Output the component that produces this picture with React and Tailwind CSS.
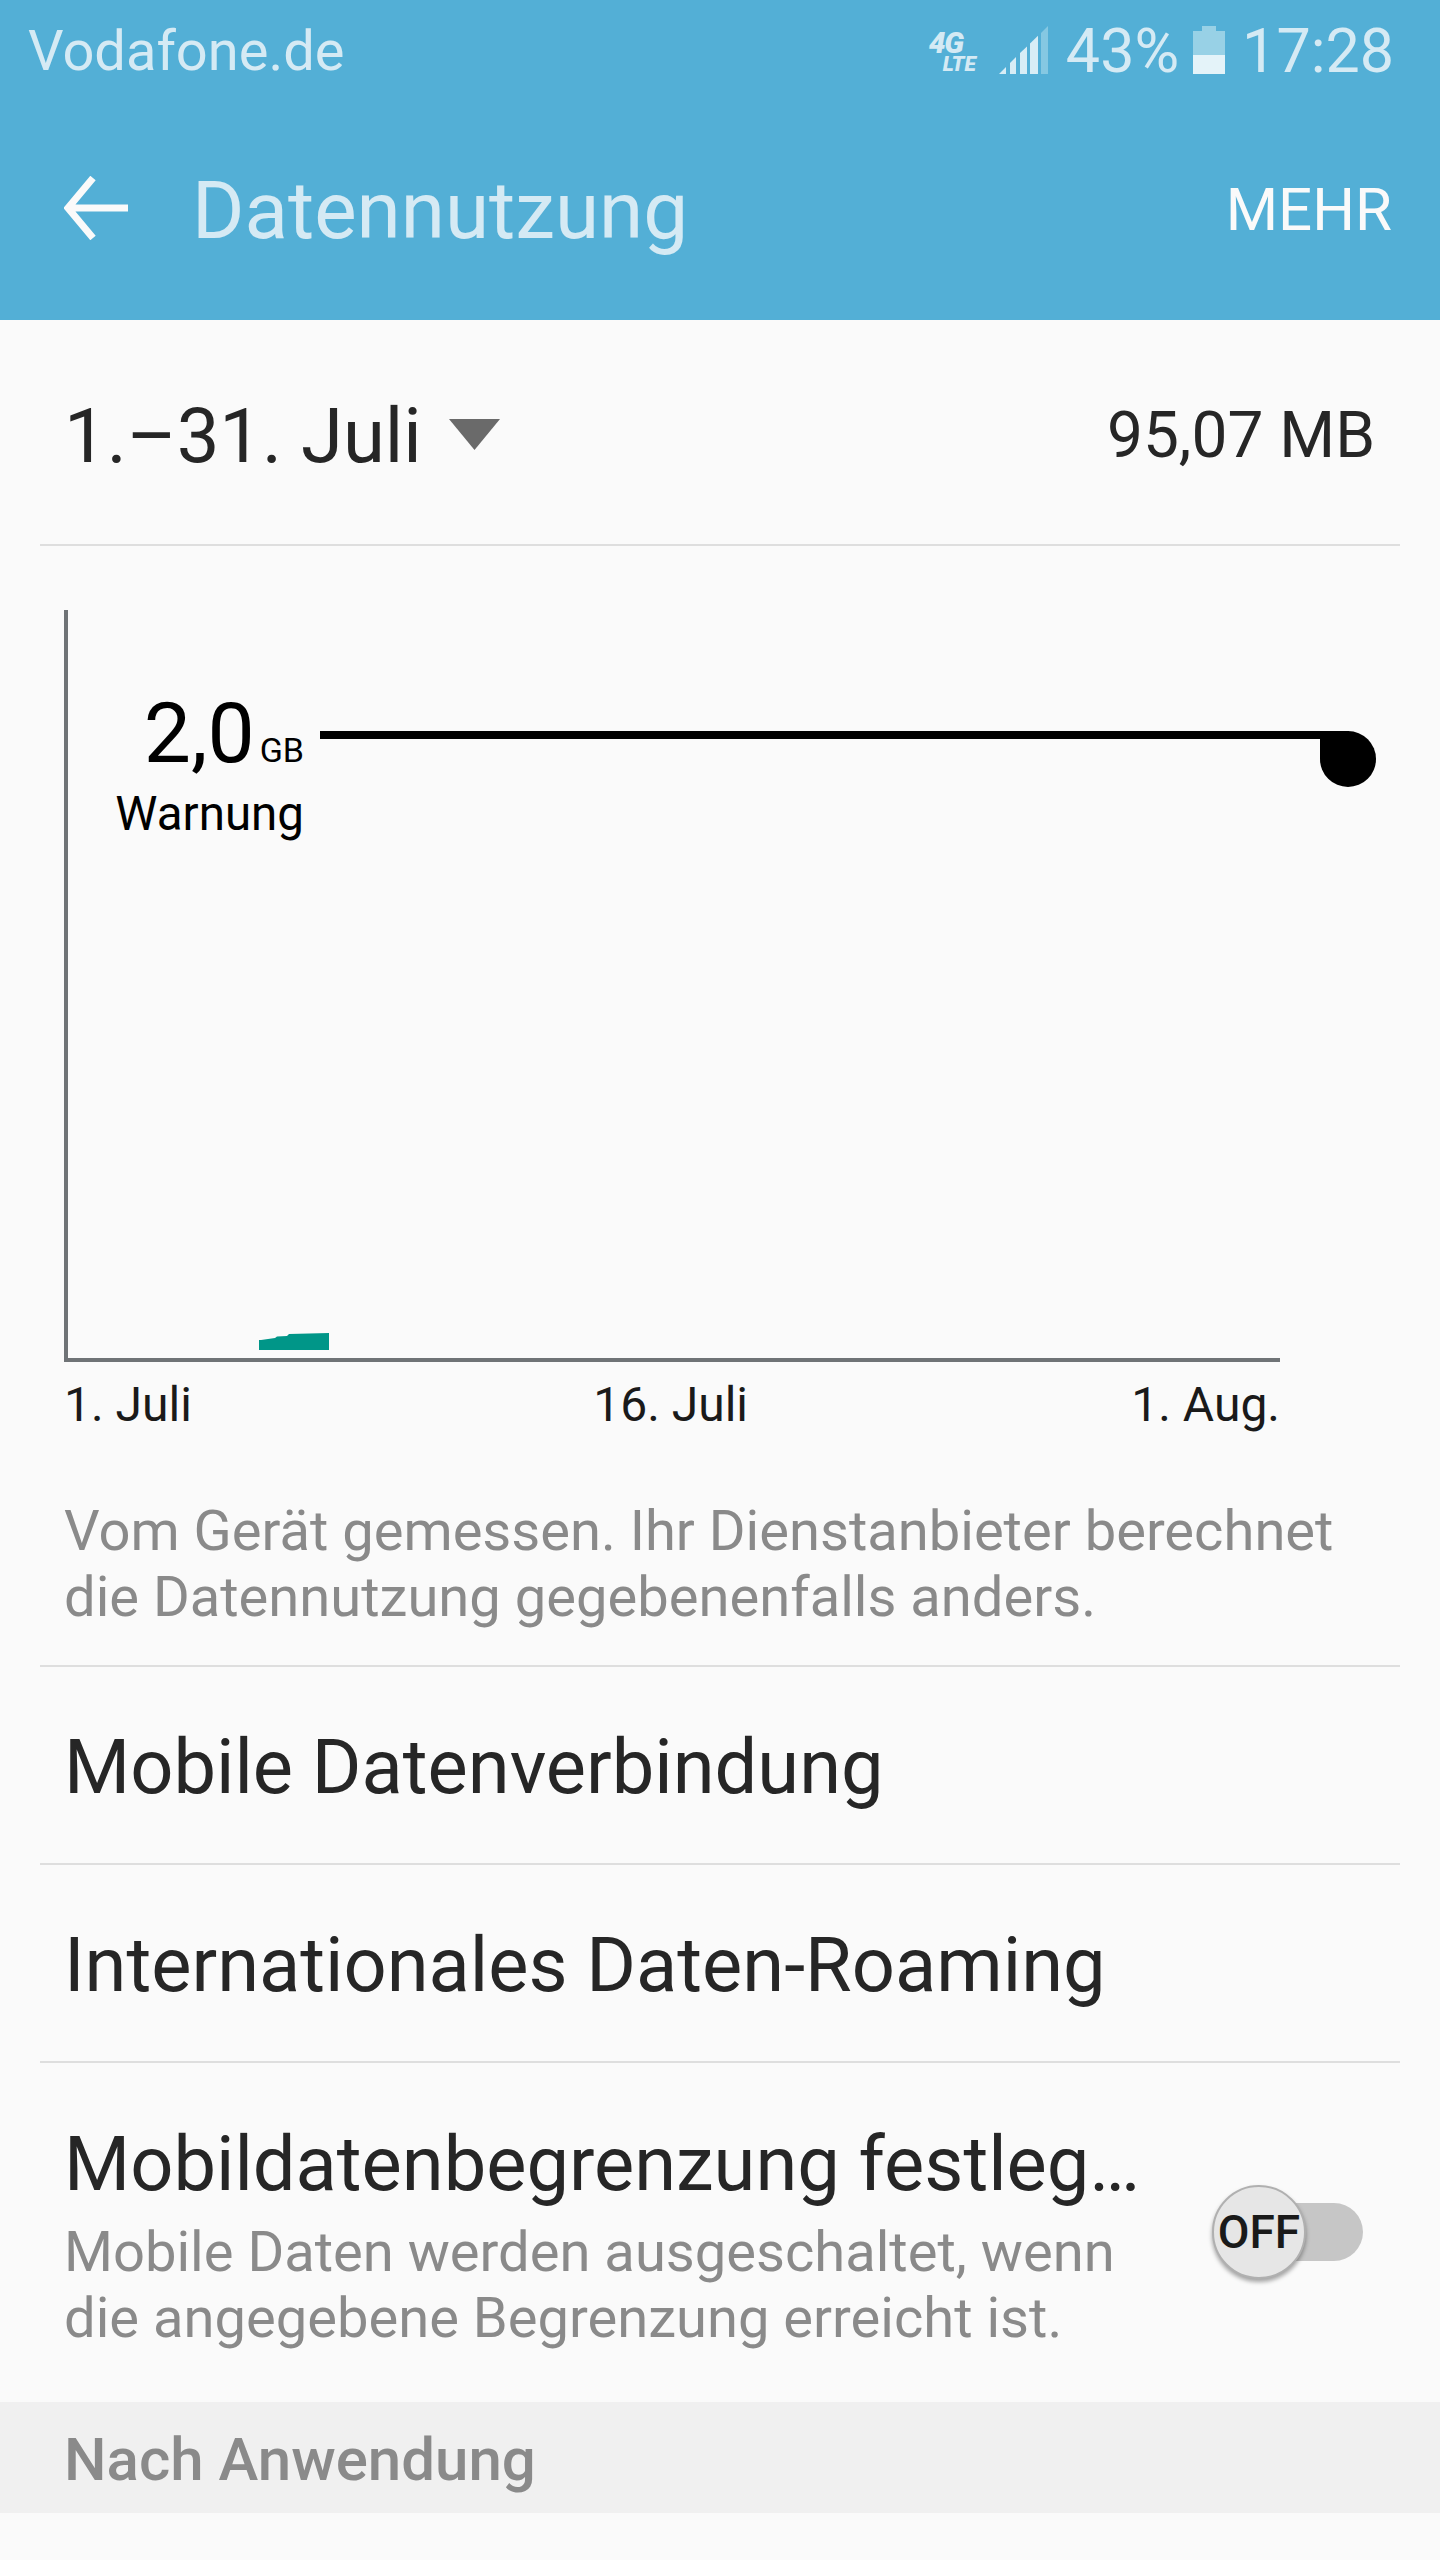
import React from "react";

const roboto = "font-['Roboto',sans-serif]";

function SignalIcon() {
  return (
    <svg width="49" height="48" viewBox="0 0 49 48" className="block">
      <polygon points="0,48 7,41 7,48" fill="#d8edf6" />
      <polygon points="11,37 17,31 17,48 11,48" fill="#d8edf6" />
      <polygon points="21,27 28,20.5 28,48 21,48" fill="#d8edf6" />
      <polygon points="31,17.6 39,9.8 39,48 31,48" fill="#d8edf6" />
      <polygon points="42,7 49,0 49,48 42,48" fill="#85c8e2" />
    </svg>
  );
}

function BatteryIcon() {
  return (
    <svg width="32" height="48" viewBox="0 0 32 48" className="block">
      <rect x="9" y="0" width="14" height="6" fill="#98d1e6" />
      <rect x="0" y="5" width="32" height="25" fill="#98d1e6" />
      <rect x="0" y="29" width="32" height="19" fill="#e4f3f9" />
    </svg>
  );
}

function Divider() {
  return <div className="mx-10 h-[2px] bg-[#dedede]" />;
}

export default function App() {
  return (
    <div className={`${roboto} w-[1440px] h-[2560px] bg-[#fafafa] overflow-hidden`}>
      <header className="h-[320px] bg-[#53afd6] flex flex-col">
        <div className="h-[104px] flex items-start pl-[28px] pr-[46px] pt-[21px] text-[56px] leading-[60px] text-[#d5eaf4]">
          <span>Vodafone.de</span>
          <div className="ml-auto flex items-center text-[61px]">
            <div className="w-[47px] h-[44px] flex flex-col italic font-black leading-none text-[#d5eaf4] mt-[4px]">
              <span className="text-[30px] leading-[24px] tracking-[-1.5px]">4G</span>
              <span className="text-[21px] leading-[18px] self-end tracking-[0px]">LTE</span>
            </div>
            <div className="ml-[23px] mb-[2px]"><SignalIcon /></div>
            <span className="ml-[18px]">43%</span>
            <div className="ml-[14px] mb-[2px]"><BatteryIcon /></div>
            <span className="ml-[17px]">17:28</span>
          </div>
        </div>
        <div className="flex-1 flex items-start relative">
          <svg width="64" height="64" viewBox="0 0 64 64" className="ml-[64px] mt-[72px] block" fill="none" stroke="#fafafa" strokeWidth="7">
            <path d="M29 2 L4 32 L29 62 M4 32 H64" />
          </svg>
          <span className="ml-[64px] mt-[62px] text-[80px] leading-[90px] text-[#d5eaf4]">Datennutzung</span>
          <span className="ml-auto mr-[48px] mt-[73px] text-[60px] leading-[66px] text-[#fafafa]">MEHR</span>
        </div>
      </header>

      <div className="h-[224px] pl-[64px] pr-[65px] flex items-center justify-between">
        <div className="flex items-center">
          <span className="text-[76px] leading-none text-[#262626] mt-[8px]">1.–31. Juli</span>
          <svg width="51" height="31" viewBox="0 0 51 31" className="ml-[27px] mt-[4px]"><polygon points="0,0 51,0 25.5,31" fill="#6a6a6a" /></svg>
        </div>
        <span className="text-[64px] leading-none text-[#262626] mt-[8px]">95,07 MB</span>
      </div>
      <Divider />

      <div className="relative h-[1119px]">
        <div className="absolute left-[64px] top-[64px] w-[1216px] h-[752px] border-l-4 border-b-4 border-[#6f7376]" />
        <div className="absolute left-[259px] top-[787px] w-[70px] h-[17px] bg-[#009688] [clip-path:polygon(0_7px,2px_7px,16px_5px,18px_3.5px,28px_3px,30px_1px,100%_0,100%_100%,0_100%)]" />
        <div className="absolute right-[1136px] top-[146px] flex items-baseline text-black">
          <span className="text-[84px] leading-[84px]">2,0</span>
          <span className="ml-[5px] text-[34px]">GB</span>
        </div>
        <div className="absolute right-[1136px] top-[240px] text-[47.5px] leading-[56px] text-black whitespace-nowrap">Warnung</div>
        <div className="absolute left-[320px] top-[185px] w-[1029px] h-[8px] bg-black" />
        <div className="absolute left-[1320px] top-[185px] w-[56px] h-[56px] rounded-[0_28px_28px_28px] bg-black" />
        <div className="absolute left-[64px] top-[831px] w-[1216px] flex justify-between text-[48px] leading-[56px] text-[#1a1a1a]">
          <span>1. Juli</span>
          <span className="relative left-[9px]">16. Juli</span>
          <span>1. Aug.</span>
        </div>
        <div className="absolute left-[64px] top-[952px] text-[56.1px] leading-[66px] text-[#8a8a8a] whitespace-nowrap">
          <div>Vom Gerät gemessen. Ihr Dienstanbieter berechnet</div>
          <div>die Datennutzung gegebenenfalls anders.</div>
        </div>
      </div>
      <Divider />

      <div className="h-[196px] pl-[64px] pt-[5px] flex items-center text-[75.8px] leading-none text-[#262626]">Mobile Datenverbindung</div>
      <Divider />
      <div className="h-[196px] pl-[64px] pt-[5px] flex items-center text-[75.8px] leading-none text-[#262626]">Internationales Daten-Roaming</div>
      <Divider />

      <div className="h-[339px] pl-[64px] pr-[77px] flex items-center">
        <div className="flex-1 min-w-0 mt-[8px]">
          <div className="text-[75.8px] leading-[84px] text-[#262626] whitespace-nowrap">Mobildatenbegrenzung festleg…</div>
          <div className="mt-[12px] text-[56.1px] leading-[66px] text-[#8a8a8a] whitespace-nowrap">
            <div>Mobile Daten werden ausgeschaltet, wenn</div>
            <div>die angegebene Begrenzung erreicht ist.</div>
          </div>
        </div>
        <div className="relative w-[151px] h-[96px] shrink-0">
          <div className="absolute left-[40px] top-[18px] right-0 h-[58px] rounded-full bg-[#c6c6c6]" />
          <div className="absolute left-0 top-0 w-[94px] h-[94px] rounded-full bg-[#e6e6e6] border-2 border-[#b0b0b0] shadow-[0_3px_4px_rgba(0,0,0,0.35)] flex items-center justify-center text-[46px] font-medium leading-none text-[#1a1a1a]">OFF</div>
        </div>
      </div>

      <div className="h-[111px] bg-[#f0f0f0] pl-[64px] pt-[4px] flex items-center text-[60px] font-medium leading-none text-[#8a8a8a]">Nach Anwendung</div>
    </div>
  );
}
